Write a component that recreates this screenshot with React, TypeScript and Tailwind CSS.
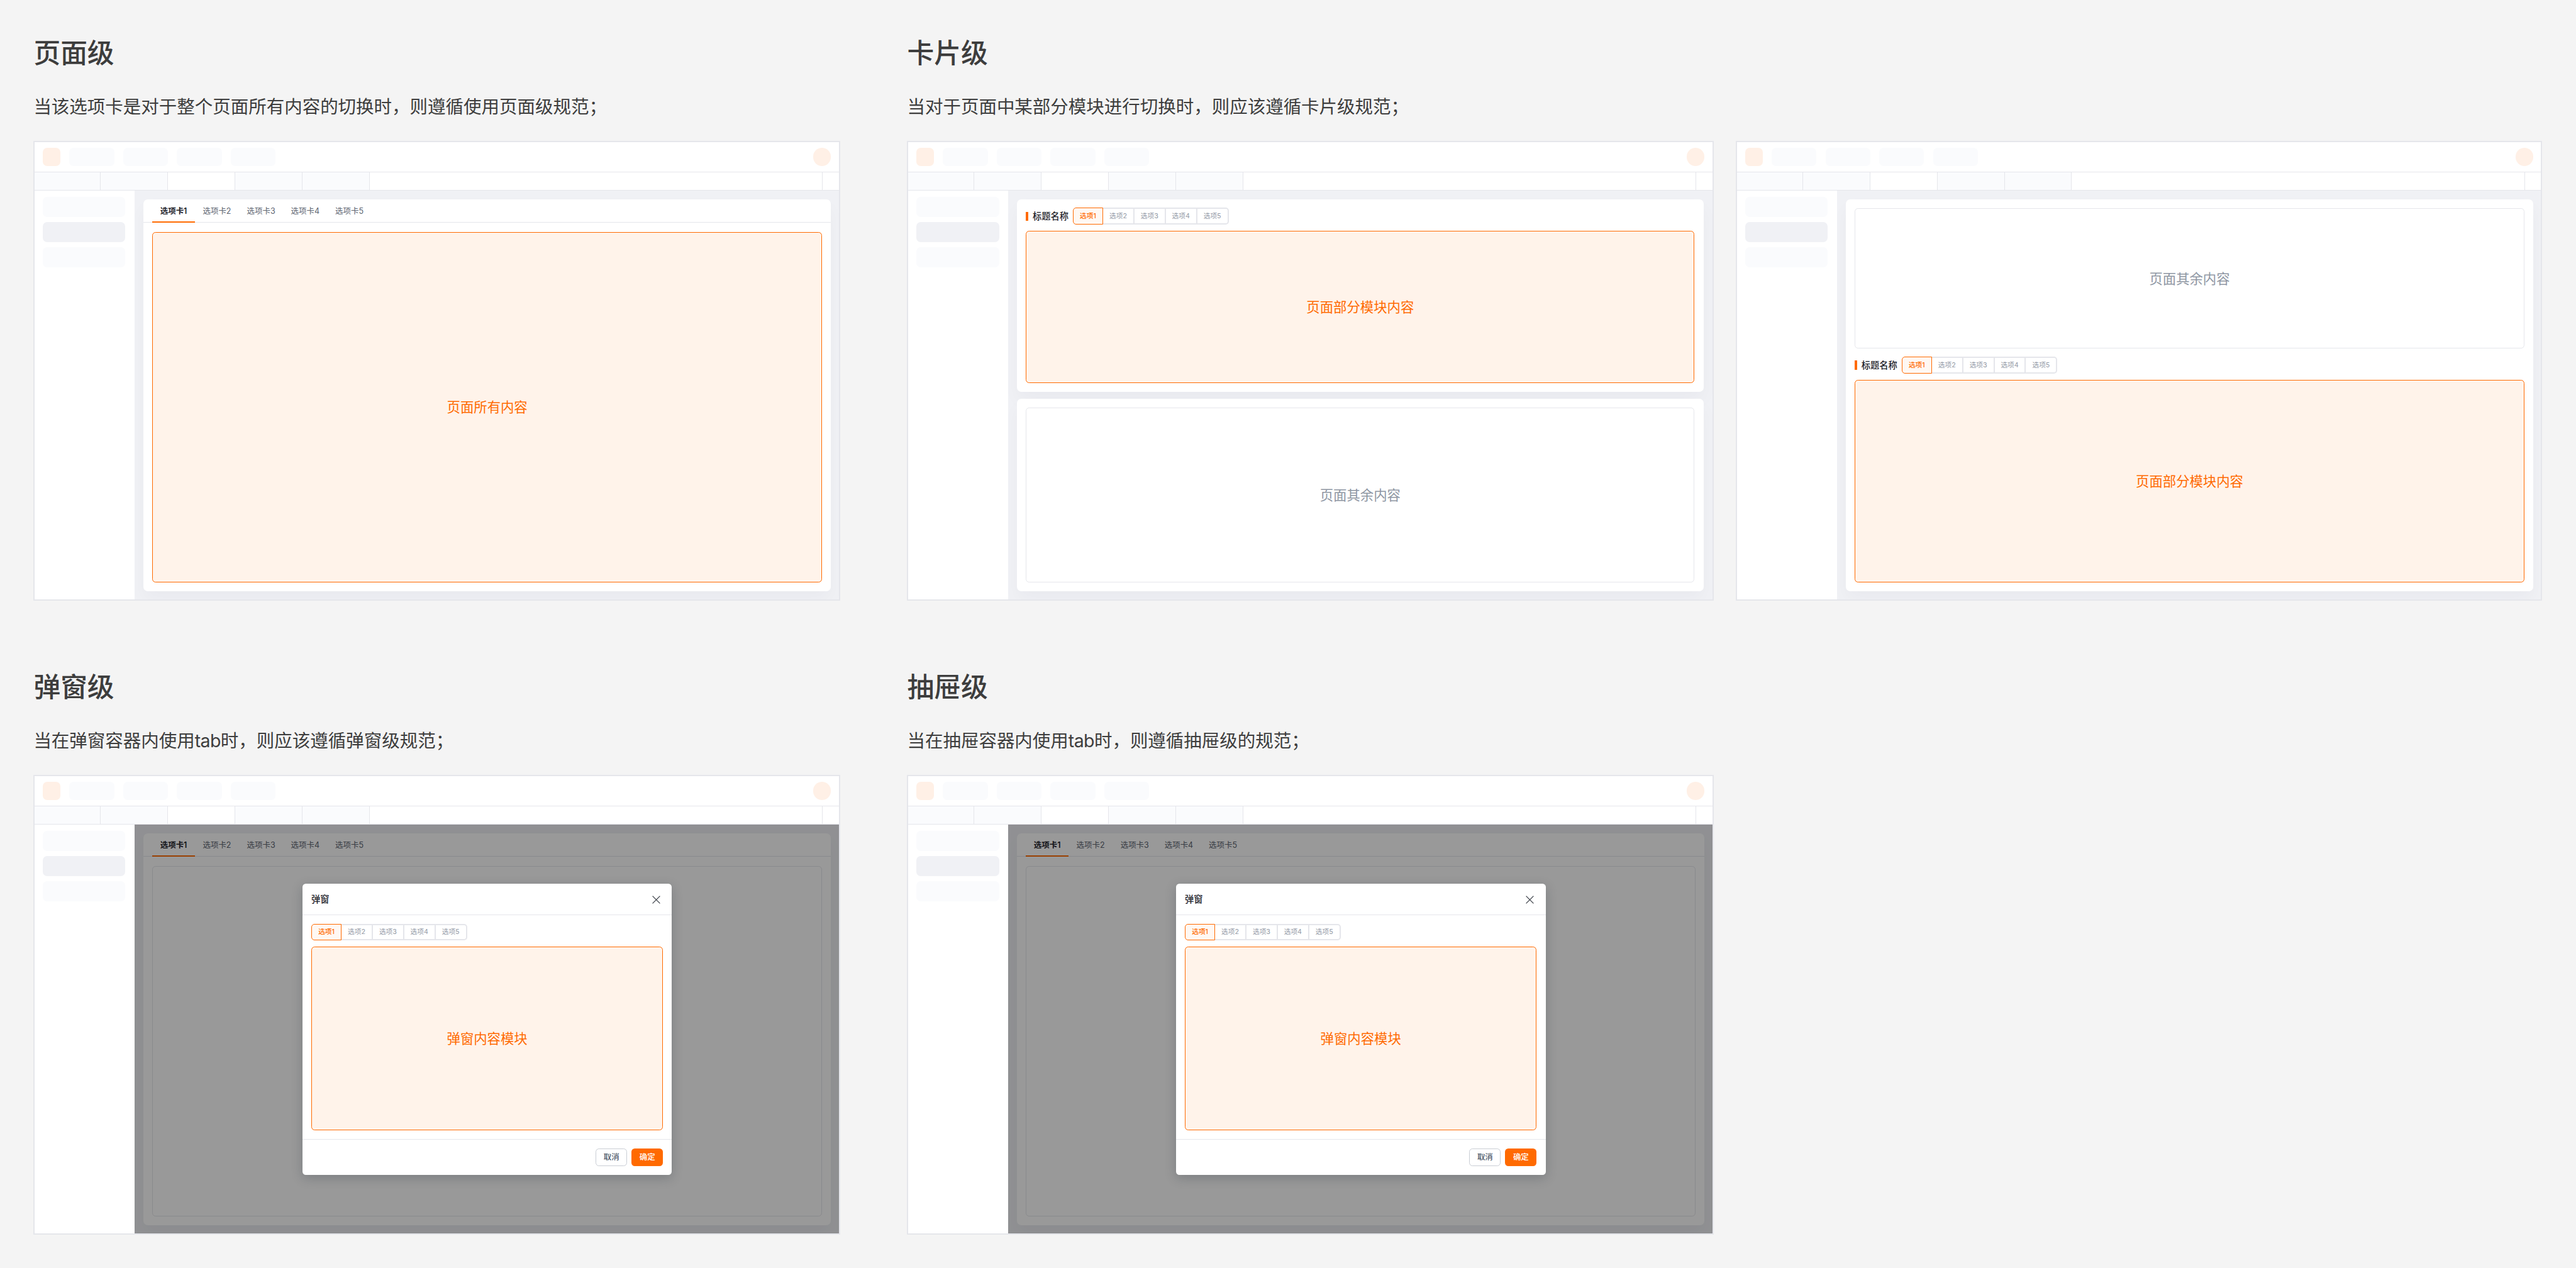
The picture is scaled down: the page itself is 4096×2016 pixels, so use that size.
import React from 'react';
import { clsx } from 'clsx';

type PanelTone = 'active' | 'idle';

const PAGE_TABS = ['选项卡1', '选项卡2', '选项卡3', '选项卡4', '选项卡5'];
const SEGMENTS = ['选项1', '选项2', '选项3', '选项4', '选项5'];

/* Large placeholder area with a centred label */
const Panel: React.FC<{ tone: PanelTone; label?: string; className?: string }> = ({ tone, label, className }) => (
  <div
    className={clsx(
      'flex items-center justify-center rounded-[5.3px] border text-[21.37px]',
      tone === 'active' ? 'border-[#ff6a00] bg-[#fff3ea] text-[#ff6a00]' : 'border-[#e5e6eb] text-[#8e96a3]',
      className
    )}
  >
    {label}
  </div>
);

/* Underlined tabs at the top of a page */
const PageTabs: React.FC = () => (
  <div className="flex h-[37.4px] shrink-0 border-b border-[#e5e6eb] px-[14.25px]">
    {PAGE_TABS.map((tab, i) => (
      <div
        key={tab}
        className={clsx(
          'flex h-[37.4px] items-center justify-center border-b-2 pt-[3px] text-[12.47px]',
          i === 0
            ? 'w-[67.7px] border-b-[#ff6a00] font-semibold text-[#1d2129]'
            : 'w-[70.2px] border-b-transparent text-[#5c6470]'
        )}
      >
        {tab}
      </div>
    ))}
  </div>
);

/* Compact button-like tabs used inside cards and dialogs */
const SegmentTabs: React.FC = () => (
  <div className="flex h-[26.7px] text-[10.69px]">
    {SEGMENTS.map((segment, i) => (
      <div
        key={segment}
        className={clsx(
          'flex items-center justify-center pt-[0.8px]',
          i === 0
            ? 'w-[48px] rounded-l-[5px] border border-[#ff6a00] bg-[#fff8f3] font-medium text-[#ff6a00]'
            : 'w-[49.9px] border-2 border-l-0 border-[#e5e6eb] text-[#9299a5]',
          i === SEGMENTS.length - 1 && 'rounded-r-[5px]'
        )}
      >
        {segment}
      </div>
    ))}
  </div>
);

const CardHeading: React.FC = () => (
  <div className="flex h-[26.7px] shrink-0 items-center">
    <span className="h-[14.25px] w-[3.56px] bg-[#ff6a00]" />
    <h3 className="mx-[7.1px] text-[14.25px] font-medium text-[#1d2129]">标题名称</h3>
    <SegmentTabs />
  </div>
);

const Card: React.FC<{ className?: string; children: React.ReactNode }> = ({ className, children }) => (
  <div className={clsx('flex flex-col rounded-[7px] bg-white shadow-[0_14px_28px_rgba(30,40,60,0.03)]', className)}>
    {children}
  </div>
);

/* Greyed-out application shell: header, opened pages strip, side menu */
const AppFrame: React.FC<{ children: React.ReactNode }> = ({ children }) => (
  <div className="relative flex h-[730.2px] w-[1282.2px] flex-col overflow-hidden bg-white">
    <div className="flex h-[49.9px] shrink-0 items-center border-b border-[#e5e6eb] px-[14.25px] pt-px">
      <div className="h-[28.5px] w-[28.5px] rounded-[7px] bg-[#fff0e6]" />
      {[0, 1, 2, 3].map((n) => (
        <div key={n} className="ml-[14.25px] h-[28.5px] w-[71.23px] rounded-[7px] bg-[#fafbfd]" />
      ))}
      <div className="ml-auto h-[28.5px] w-[28.5px] rounded-full bg-[#fff0e6]" />
    </div>
    <div className="flex h-[28.5px] shrink-0 border-b border-[#e5e6eb]">
      {[0, 1, 2, 3, 4].map((n) => (
        <div key={n} className={clsx('w-[106.85px] border-r border-[#e5e6eb]', n !== 2 && 'bg-[#fafbfd]')} />
      ))}
      <div className="ml-auto w-[28.5px] border-l border-[#e5e6eb]" />
    </div>
    <div className="flex min-h-0 flex-1">
      <div className="flex w-[160.3px] shrink-0 flex-col gap-2 px-[14.25px] pt-[9.8px]">
        <div className="h-8 rounded-[7px] bg-[#fafbfd]" />
        <div className="h-8 rounded-[7px] bg-[#f0f1f5]" />
        <div className="h-8 rounded-[7px] bg-[#fafbfd]" />
      </div>
      <div className="relative flex min-w-0 flex-1 flex-col overflow-hidden bg-[#f0f1f5] p-[14.25px]">
        {children}
      </div>
    </div>
    <div className="pointer-events-none absolute inset-0 border-2 border-[#e5e6eb]" />
  </div>
);

/* Modal layer covering the content area */
const DialogLayer: React.FC = () => (
  <div className="absolute inset-0 flex items-center justify-center bg-black/40">
    <div className="flex h-[463px] w-[587.7px] flex-col rounded-[5.3px] bg-white shadow-[0_5px_18px_rgba(20,30,45,0.22)]">
      <div className="flex h-[49.9px] shrink-0 items-center justify-between border-b border-[#e5e6eb] px-[14.25px] pt-px">
        <h3 className="text-[14.25px] font-medium text-[#1d2129]">弹窗</h3>
        <svg viewBox="0 0 22 22" className="mr-[4.2px] h-[13px] w-[13px]" fill="none" stroke="#3a3f47" strokeWidth="2.2">
          <path d="M1 1 21 21M21 1 1 21" />
        </svg>
      </div>
      <div className="flex min-h-0 flex-1 flex-col px-[14.25px] pb-[14.25px] pt-[13.6px]">
        <SegmentTabs />
        <Panel tone="active" label="弹窗内容模块" className="mt-[9.8px] flex-1" />
      </div>
      <div className="flex h-[57px] shrink-0 items-center justify-end gap-[7.1px] border-t border-[#e5e6eb] px-[14.25px] text-[12.47px] font-medium">
        <div className="flex h-[28.5px] w-[49.9px] items-center justify-center rounded-[5.3px] border border-[#c9cdd4] text-[#4e5969]">取消</div>
        <div className="flex h-[28.5px] w-[49.9px] items-center justify-center rounded-[5.3px] bg-[#ff6a00] text-white">确定</div>
      </div>
    </div>
  </div>
);

const PageWithDialog: React.FC = () => (
  <AppFrame>
    <Card className="flex-1">
      <PageTabs />
      <Panel tone="idle" className="m-[14.25px] flex-1" />
    </Card>
    <DialogLayer />
  </AppFrame>
);

const Section: React.FC<{ title: string; description: React.ReactNode; children: React.ReactNode }> = ({
  title,
  description,
  children
}) => (
  <section className="flex flex-col text-[#3d3d3d]">
    <h2 className="h-[62px] text-[42.74px] font-medium leading-[62px]">{title}</h2>
    <p className="mt-[33px] h-[42px] whitespace-nowrap text-[28.49px] leading-[42px]">{description}</p>
    <div className="mt-[33.6px] flex gap-[35.6px]">{children}</div>
  </section>
);

export default function App() {
  return (
    <div className="flex h-[2016px] w-[4096px] flex-col gap-[107.2px] overflow-hidden bg-[#f4f4f4] px-[53.4px] pt-[53.8px] font-['Inter','Noto_Sans_CJK_SC',sans-serif]">
      <div className="flex gap-[106.9px]">
        <Section title="页面级" description="当该选项卡是对于整个页面所有内容的切换时，则遵循使用页面级规范；">
          <AppFrame>
            <Card className="flex-1">
              <PageTabs />
              <Panel tone="active" label="页面所有内容" className="m-[14.25px] flex-1" />
            </Card>
          </AppFrame>
        </Section>
        <Section title="卡片级" description="当对于页面中某部分模块进行切换时，则应该遵循卡片级规范；">
          <AppFrame>
            <Card className="mr-[1.8px] h-[306.3px] px-[14.25px] pb-[14.25px] pt-[13.4px]">
              <CardHeading />
              <Panel tone="active" label="页面部分模块内容" className="mt-[9.8px] flex-1" />
            </Card>
            <Card className="mr-[1.8px] mt-[10.7px] flex-1 p-[14.25px]">
              <Panel tone="idle" label="页面其余内容" className="flex-1" />
            </Card>
          </AppFrame>
          <AppFrame>
            <Card className="flex-1 p-[14.25px]">
              <Panel tone="idle" label="页面其余内容" className="h-[222.6px]" />
              <div className="h-[13.4px]" />
              <CardHeading />
              <Panel tone="active" label="页面部分模块内容" className="mt-[9.8px] flex-1" />
            </Card>
          </AppFrame>
        </Section>
      </div>
      <div className="flex gap-[106.9px]">
        <Section
          title="弹窗级"
          description={<>当在弹窗容器内使用<span className="tracking-[-0.6px]">tab</span>时，则应该遵循弹窗级规范；</>}
        >
          <PageWithDialog />
        </Section>
        <Section
          title="抽屉级"
          description={<>当在抽屉容器内使用<span className="tracking-[-0.6px]">tab</span>时，则遵循抽屉级的规范；</>}
        >
          <PageWithDialog />
        </Section>
      </div>
    </div>
  );
}
